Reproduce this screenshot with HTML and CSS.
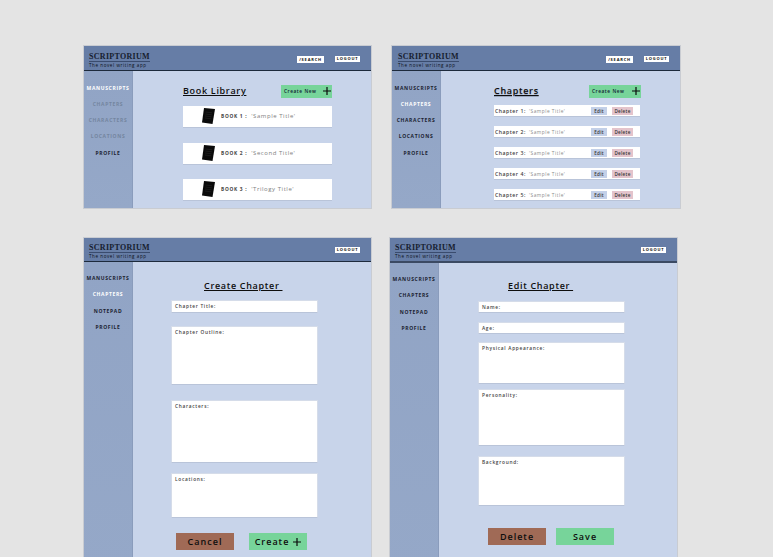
FILE: index.html
```html
<!DOCTYPE html>
<html lang="en">
<head>
<meta charset="UTF-8">
<meta name="viewport" content="width=device-width, initial-scale=1.0">
<title>Scriptorium wireframes</title>
<link rel="stylesheet" href="styles.css">
</head>
<body>

<svg class="defs" width="0" height="0" aria-hidden="true">
  <symbol id="book" viewBox="0 0 13 16">
    <polygon points="2,0 13,1 10.500,16 0,14.500" fill="#0a0a0a"/>
    <path d="M3.500 4l6.500 .8M3.300 6l6.500 .8M3 8l6.500 .8M2.800 10l6.500 .8" stroke="#2c2c2c" stroke-width=".5"/>
  </symbol>
  <symbol id="plus" viewBox="0 0 8 8">
    <path d="M4 0v8M0 4h8" stroke="#0a0a0a" stroke-width="1.200" fill="none"/>
  </symbol>
</svg>

<div class="board">

  <!-- book library -->
  <section class="frame frame-library">
    <header class="topbar">
      <div class="brand">
        <div class="brand-name">SCRIPTORIUM</div>
        <div class="brand-tag">The novel writing app</div>
      </div>
      <div class="top-actions">
        <button class="top-btn top-search">/SEARCH</button>
        <button class="top-btn">LOGOUT</button>
      </div>
    </header>
    <div class="body">
      <nav class="side">
        <a class="side-link active">MANUSCRIPTS</a>
        <a class="side-link muted">CHAPTERS</a>
        <a class="side-link muted">CHARACTERS</a>
        <a class="side-link muted">LOCATIONS</a>
        <a class="side-link">PROFILE</a>
      </nav>
      <main class="main main-list">
        <div class="list-head">
          <h2 class="page-title">Book Library</h2>
          <button class="create-btn">Create New <svg class="plus"><use href="#plus"/></svg></button>
        </div>
        <div class="book-cards">
          <div class="book-card"><svg class="book-icon"><use href="#book"/></svg><b class="book-no">BOOK 1 :</b><span class="book-name">'Sample Title'</span></div>
          <div class="book-card"><svg class="book-icon"><use href="#book"/></svg><b class="book-no">BOOK 2 :</b><span class="book-name">'Second Title'</span></div>
          <div class="book-card"><svg class="book-icon"><use href="#book"/></svg><b class="book-no">BOOK 3 :</b><span class="book-name">'Trilogy Title'</span></div>
        </div>
      </main>
    </div>
  </section>

  <!-- chapter list -->
  <section class="frame frame-chapters">
    <header class="topbar">
      <div class="brand">
        <div class="brand-name">SCRIPTORIUM</div>
        <div class="brand-tag">The novel writing app</div>
      </div>
      <div class="top-actions">
        <button class="top-btn top-search">/SEARCH</button>
        <button class="top-btn">LOGOUT</button>
      </div>
    </header>
    <div class="body">
      <nav class="side">
        <a class="side-link">MANUSCRIPTS</a>
        <a class="side-link active">CHAPTERS</a>
        <a class="side-link">CHARACTERS</a>
        <a class="side-link">LOCATIONS</a>
        <a class="side-link">PROFILE</a>
      </nav>
      <main class="main main-list">
        <div class="list-head">
          <h2 class="page-title title-shadow">Chapters</h2>
          <button class="create-btn">Create New <svg class="plus"><use href="#plus"/></svg></button>
        </div>
        <div class="chapter-rows">
          <div class="chapter-row"><b class="chapter-no">Chapter 1:</b><span class="chapter-name">'Sample Title'</span><button class="mini-btn edit">Edit</button><button class="mini-btn delete">Delete</button></div>
          <div class="chapter-row"><b class="chapter-no">Chapter 2:</b><span class="chapter-name">'Sample Title'</span><button class="mini-btn edit">Edit</button><button class="mini-btn delete">Delete</button></div>
          <div class="chapter-row"><b class="chapter-no">Chapter 3:</b><span class="chapter-name">'Sample Title'</span><button class="mini-btn edit">Edit</button><button class="mini-btn delete">Delete</button></div>
          <div class="chapter-row"><b class="chapter-no">Chapter 4:</b><span class="chapter-name">'Sample Title'</span><button class="mini-btn edit">Edit</button><button class="mini-btn delete">Delete</button></div>
          <div class="chapter-row"><b class="chapter-no">Chapter 5:</b><span class="chapter-name">'Sample Title'</span><button class="mini-btn edit">Edit</button><button class="mini-btn delete">Delete</button></div>
        </div>
      </main>
    </div>
  </section>

  <!-- create chapter -->
  <section class="frame frame-create">
    <header class="topbar">
      <div class="brand">
        <div class="brand-name">SCRIPTORIUM</div>
        <div class="brand-tag">The novel writing app</div>
      </div>
      <div class="top-actions">
        <button class="top-btn">LOGOUT</button>
      </div>
    </header>
    <div class="body">
      <nav class="side">
        <a class="side-link">MANUSCRIPTS</a>
        <a class="side-link active">CHAPTERS</a>
        <a class="side-link">NOTEPAD</a>
        <a class="side-link">PROFILE</a>
      </nav>
      <main class="main main-form">
        <h2 class="page-title form-title create-title">Create Chapter&nbsp;</h2>
        <div class="field f-title">Chapter Title:</div>
        <div class="field f-outline">Chapter Outline:</div>
        <div class="field f-characters">Characters:</div>
        <div class="field f-locations">Locations:</div>
        <div class="form-actions create-actions">
          <button class="big-btn cancel">Cancel</button>
          <button class="big-btn confirm">Create <svg class="plus"><use href="#plus"/></svg></button>
        </div>
      </main>
    </div>
  </section>

  <!-- edit chapter -->
  <section class="frame frame-edit">
    <header class="topbar">
      <div class="brand">
        <div class="brand-name">SCRIPTORIUM</div>
        <div class="brand-tag">The novel writing app</div>
      </div>
      <div class="top-actions">
        <button class="top-btn">LOGOUT</button>
      </div>
    </header>
    <div class="body">
      <nav class="side">
        <a class="side-link">MANUSCRIPTS</a>
        <a class="side-link">CHAPTERS</a>
        <a class="side-link">NOTEPAD</a>
        <a class="side-link">PROFILE</a>
      </nav>
      <main class="main main-form">
        <h2 class="page-title form-title edit-title">Edit Chapter&nbsp;</h2>
        <div class="field f-name">Name:</div>
        <div class="field f-age">Age:</div>
        <div class="field f-look">Physical Appearance:</div>
        <div class="field f-personality">Personality:</div>
        <div class="field f-background">Background:</div>
        <div class="form-actions edit-actions">
          <button class="big-btn cancel">Delete</button>
          <button class="big-btn confirm">Save</button>
        </div>
      </main>
    </div>
  </section>

</div>

</body>
</html>
```

FILE: styles.css
```css
html, body {
  margin: 0;
  padding: 0;
  height: 100%;
  overflow: hidden;
}
body {
  background-color: #e4e4e4;
  font-family: "Open Sans", sans-serif;
  color: #111;
}
button {
  font-family: inherit;
  border: none;
  padding: 0;
}
.defs {
  position: absolute;
}
.board {
  display: grid;
  grid-template-columns: 308px 290px;
  grid-template-rows: 164px auto;
  row-gap: 28px;
  padding: 45px 0 0 83px;
}

/* frames */
.frame {
  display: flex;
  flex-direction: column;
  box-sizing: border-box;
  width: 289px;
  border: 1px solid #c9ccd2;
  background-color: #c8d4ea;
}
.frame-chapters {
  width: 290px;
}
.frame-create,
.frame-edit {
  height: 340px;
}
.frame-edit {
  margin-left: -2px;
}
.topbar {
  display: flex;
  justify-content: space-between;
  box-sizing: border-box;
  height: 25px;
  flex-shrink: 0;
  padding: 7px 11px 0 5px;
  background-color: #667da6;
  border-bottom: 1px solid #1d2a3c;
}
.frame-chapters .topbar {
  padding-left: 6px;
}
.frame-create .topbar {
  height: 24px;
  padding-top: 6px;
}
.frame-edit .topbar {
  padding-top: 6px;
  border-bottom: 2px solid #3b4a63;
}
.brand-name {
  font-family: "Liberation Serif", serif;
  font-size: 8px;
  line-height: 8px;
  font-weight: bold;
  letter-spacing: .3px;
  color: #16202f;
  border-bottom: 1px solid #3a4c6e;
}
.brand-tag {
  font-size: 4.500px;
  line-height: 6px;
  letter-spacing: .6px;
  color: #0b0f16;
  white-space: nowrap;
}
.top-actions {
  display: flex;
  gap: 11px;
  padding-top: 3px;
}
.top-btn {
  width: 25px;
  height: 6px;
  background-color: #fff;
  color: #111;
  font-size: 4px;
  line-height: 6px;
  font-weight: 700;
  letter-spacing: .8px;
  text-align: center;
  white-space: nowrap;
}
.top-search {
  width: 27px;
  height: 7px;
}

/* sidebar */
.body {
  display: flex;
  flex: 1;
  min-height: 0;
}
.side {
  display: flex;
  flex-direction: column;
  align-items: center;
  gap: 9.300px;
  box-sizing: border-box;
  width: 49px;
  flex-shrink: 0;
  padding-top: 13.500px;
  background: linear-gradient(180deg, #91a4c5, #95a8c8);
  border-right: 1px solid #8a9cbc;
}
.frame-create .side,
.frame-edit .side {
  padding-top: 13px;
}
.side-link {
  font-size: 5px;
  line-height: 7px;
  font-weight: 700;
  letter-spacing: .65px;
  color: #1b2230;
  white-space: nowrap;
}
.side-link.active {
  color: #fff;
}
.side-link.muted {
  color: #74859f;
}

/* list pages */
.main {
  flex: 1;
  min-width: 0;
}
.main-list {
  box-sizing: border-box;
  padding: 14px 0 0 50px;
}
.frame-chapters .main-list {
  padding-left: 53px;
}
.list-head {
  display: flex;
  justify-content: space-between;
  align-items: flex-start;
  width: 149px;
  height: 13px;
}
.frame-chapters .list-head {
  width: 147px;
}
.page-title {
  margin: 0;
  font-size: 9px;
  line-height: 11px;
  font-weight: 600;
  letter-spacing: .68px;
  color: #0e0e0e;
  text-decoration: underline;
  text-underline-offset: 1px;
  white-space: nowrap;
}
.title-shadow {
  text-shadow: 0 1px 1px #9aa6bc;
}
.create-btn {
  display: flex;
  align-items: center;
  justify-content: space-between;
  box-sizing: border-box;
  width: 51px;
  height: 12.500px;
  padding: 0 1.500px 0 3px;
  background-color: #77d49a;
  font-size: 4.800px;
  font-weight: 600;
  letter-spacing: .55px;
  color: #123;
  white-space: nowrap;
}
.frame-chapters .create-btn {
  width: 52px;
  flex-shrink: 0;
}
.plus {
  width: 8px;
  height: 8px;
}
.book-cards {
  display: flex;
  flex-direction: column;
  gap: 14.700px;
  margin-top: 8px;
}
.book-card {
  display: flex;
  align-items: center;
  box-sizing: border-box;
  width: 149px;
  height: 22px;
  padding: 0 0 1px 19px;
  background-color: #fff;
  border-bottom: 1px solid #b9c4d9;
}
.book-icon {
  width: 13px;
  height: 16px;
  flex-shrink: 0;
}
.book-no {
  margin-left: 6px;
  font-size: 4.800px;
  letter-spacing: .7px;
  color: #444;
  white-space: nowrap;
}
.book-name {
  margin-left: 4px;
  font-size: 6px;
  letter-spacing: .55px;
  color: #808080;
  white-space: nowrap;
}
.chapter-rows {
  display: flex;
  flex-direction: column;
  gap: 9px;
  margin-top: 7px;
}
.chapter-row {
  display: flex;
  align-items: center;
  box-sizing: border-box;
  width: 146px;
  height: 12px;
  padding-left: 1px;
  background-color: #fff;
  border-bottom: 1px solid #b9c4d9;
}
.chapter-no {
  width: 32px;
  font-size: 5.200px;
  font-weight: 600;
  letter-spacing: .5px;
  color: #3e3e3e;
  white-space: nowrap;
}
.chapter-name {
  margin-left: 2px;
  width: 62px;
  font-size: 4.800px;
  letter-spacing: .5px;
  color: #8b8b8b;
  white-space: nowrap;
}
.mini-btn {
  height: 8px;
  font-size: 4.600px;
  line-height: 8px;
  font-weight: 600;
  letter-spacing: .3px;
  color: #333;
  text-align: center;
}
.mini-btn.edit {
  width: 16px;
  background-color: #c3d0e8;
}
.mini-btn.delete {
  width: 21px;
  margin-left: 5px;
  background-color: #e4c4cc;
}

/* form pages */
.main-form {
  display: flex;
  flex-direction: column;
  align-items: flex-start;
  box-sizing: border-box;
  padding: 17px 0 0 38px;
}
.frame-edit .main-form {
  padding: 16px 0 0 39px;
}
.form-title {
  height: 13px;
  line-height: 13px;
}
.create-title {
  margin-left: 33px;
}
.edit-title {
  margin-left: 30px;
}
.field {
  box-sizing: border-box;
  width: 147px;
  padding: 2px 3px;
  background-color: #fff;
  border: 1px solid #d5dce9;
  border-bottom-color: #b9c4d9;
  font-size: 4.800px;
  line-height: 7px;
  font-weight: 600;
  letter-spacing: .7px;
  color: #444;
  white-space: nowrap;
}
.f-title {
  height: 13px;
  margin-top: 8px;
}
.f-outline {
  height: 59px;
  margin-top: 13px;
}
.f-characters {
  height: 63px;
  margin-top: 15px;
}
.f-locations {
  height: 45px;
  margin-top: 10px;
}
.f-name {
  height: 12px;
  margin-top: 9px;
}
.f-age {
  height: 12px;
  margin-top: 9px;
}
.f-look {
  height: 42px;
  margin-top: 8px;
}
.f-personality {
  height: 57px;
  margin-top: 5px;
}
.f-background {
  height: 50px;
  margin-top: 10px;
}
.form-actions {
  display: flex;
}
.create-actions {
  gap: 15px;
  margin: 15px 0 0 5px;
}
.edit-actions {
  gap: 10px;
  margin: 22px 0 0 10px;
}
.big-btn {
  display: flex;
  align-items: center;
  justify-content: center;
  gap: 4px;
  width: 58px;
  height: 17px;
  font-size: 9px;
  font-weight: 600;
  letter-spacing: 1px;
  color: #0e0e0e;
}
.big-btn.cancel {
  background-color: #a06a56;
}
.big-btn.confirm {
  background-color: #77d49a;
}
```
